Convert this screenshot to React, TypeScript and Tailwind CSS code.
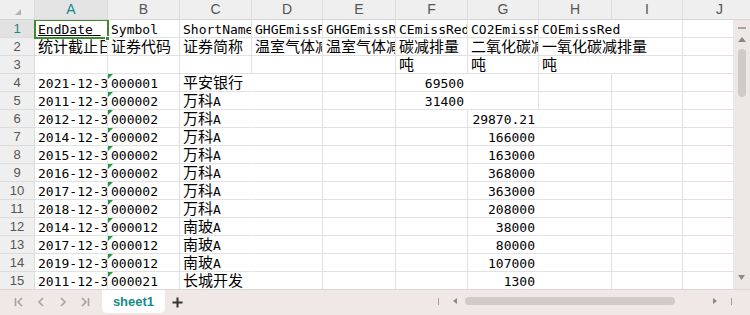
import React from "react";

const COLS = ["A", "B", "C", "D", "E", "F", "G", "H", "I", "J"];
const WIDTHS = [
  "w-[73px]",
  "w-[72px]",
  "w-[72px]",
  "w-[71px]",
  "w-[73px]",
  "w-[72px]",
  "w-[71px]",
  "w-[73px]",
  "w-[71px]",
  "w-[74px]",
];

const rows: string[][] = [
  ["EndDate", "Symbol", "ShortName", "GHGEmissRed", "GHGEmissRedInt", "CEmissRed", "CO2EmissRed", "COEmissRed", "", ""],
  ["统计截止日期", "证券代码", "证券简称", "温室气体减排量", "温室气体减排强度", "碳减排量", "二氧化碳减排量", "一氧化碳减排量", "", ""],
  ["", "", "", "", "", "吨", "吨", "吨", "", ""],
  ["2021-12-31", "000001", "平安银行", "", "", "69500", "", "", "", ""],
  ["2011-12-31", "000002", "万科A", "", "", "31400", "", "", "", ""],
  ["2012-12-31", "000002", "万科A", "", "", "", "29870.21", "", "", ""],
  ["2014-12-31", "000002", "万科A", "", "", "", "166000", "", "", ""],
  ["2015-12-31", "000002", "万科A", "", "", "", "163000", "", "", ""],
  ["2016-12-31", "000002", "万科A", "", "", "", "368000", "", "", ""],
  ["2017-12-31", "000002", "万科A", "", "", "", "363000", "", "", ""],
  ["2018-12-31", "000002", "万科A", "", "", "", "208000", "", "", ""],
  ["2014-12-31", "000012", "南玻A", "", "", "", "38000", "", "", ""],
  ["2017-12-31", "000012", "南玻A", "", "", "", "80000", "", "", ""],
  ["2019-12-31", "000012", "南玻A", "", "", "", "107000", "", "", ""],
  ["2011-12-31", "000021", "长城开发", "", "", "", "1300", "", "", ""],
];

const CJK_RE = /([\u4e00-\u9fff]+)/;
const isNum = (s: string) => /^[\d.]+$/.test(s);

// CJK runs are drawn a bit larger than the latin half-width glyphs
function Text({ value }: { value: string }) {
  return (
    <>
      {value.split(CJK_RE).map((part, i) =>
        CJK_RE.test(part) ? (
          <span key={i} className="text-[15px] leading-[16px]">
            {part}
          </span>
        ) : (
          <span key={i}>{part}</span>
        )
      )}
    </>
  );
}

function Cell({ value, col, row, next }: { value: string; col: number; row: number; next: string }) {
  const overflow = value !== "" && next === "";
  const right = (col === 5 || col === 6) && isNum(value);
  // numbers stored as text get the little green flag
  const flagged = col === 1 && row >= 3;

  return (
    <div
      className={
        "relative h-[18px] shrink-0 flex items-end whitespace-nowrap border-b border-[#e1e1e1] text-[13px] leading-[15px] " +
        WIDTHS[col] +
        (overflow && col < 9 ? " overflow-visible border-r border-r-transparent" : " overflow-hidden border-r border-r-[#e1e1e1]") +
        (right ? " justify-end pr-[3px]" : " pl-[3px]")
      }
    >
      {flagged && (
        <span className="absolute left-0 top-0 w-0 h-0 border-t-[5px] border-t-[#1d9a3c] border-r-[5px] border-r-transparent" />
      )}
      {row === 0 && col === 0 ? (
        <span className="underline underline-offset-[1px]">{value}&nbsp;</span>
      ) : (
        <Text value={value} />
      )}
    </div>
  );
}

export default function App() {
  return (
    <div className="w-[750px] h-[315px] overflow-hidden bg-white flex flex-col font-['DejaVu_Sans_Mono','Noto_Sans_CJK_SC',monospace] text-black">
      {/* column headers */}
      <div className="h-[20px] flex shrink-0 bg-[#efefef] border-b border-[#d6d6d6] font-['Liberation_Sans','Noto_Sans_CJK_SC',sans-serif] text-[14px] text-[#555]">
        <div className="w-[35px] shrink-0 relative border-r border-[#dcdcdc]">
          <svg className="absolute left-[15px] top-[9px]" width="6" height="6" viewBox="0 0 6 6">
            <polygon points="6,0 6,6 0,6" fill="#b4b4b4" />
          </svg>
        </div>
        {COLS.map((c, i) => (
          <div
            key={c}
            className={
              "shrink-0 flex items-center justify-center border-r border-[#dcdcdc] " +
              WIDTHS[i] +
              (i === 0 ? " bg-[#e4e4e4] text-[#16888a]" : "")
            }
          >
            {c}
          </div>
        ))}
      </div>

      <div className="flex flex-1 min-h-0">
        {/* grid */}
        <div className="relative w-[733px] overflow-hidden">
          {rows.map((r, ri) => (
            <div key={ri} className="flex">
              <div
                className={
                  "w-[35px] h-[18px] shrink-0 flex items-center justify-center border-r border-b border-[#dcdcdc] font-['Liberation_Sans',sans-serif] text-[13px] " +
                  (ri === 0 ? "bg-[#e2e2e2] text-[#16888a]" : "bg-[#efefef] text-[#555]")
                }
              >
                {ri + 1}
              </div>
              {r.map((v, ci) => (
                <Cell key={ci} value={v} col={ci} row={ri} next={r[ci + 1] ?? ""} />
              ))}
            </div>
          ))}
          {/* selection on A1 */}
          <div className="absolute left-[34px] top-[-1px] w-[75px] h-[20px] border-2 border-[#3d8a2f]" />
          <div className="absolute left-[105px] top-[16px] w-[5px] h-[5px] bg-[#3d8a2f] border border-white" />
        </div>

        {/* vertical scrollbar */}
        <div className="w-[17px] shrink-0 bg-[#ede7e6] flex flex-col items-center">
          <div className="mt-[7px] w-[8px] h-[2px] bg-[#a9a3a3]" />
          <svg className="mt-[8px]" width="8" height="5" viewBox="0 0 8 5">
            <polygon points="4,0 8,5 0,5" fill="#8d8787" />
          </svg>
          <div className="mt-[7px] w-[8px] h-[48px] rounded-full bg-[#cfc9c9]" />
          <div className="flex-1" />
          <svg className="mb-[9px]" width="7" height="5" viewBox="0 0 7 5">
            <polygon points="0,0 7,0 3.5,5" fill="#8d8787" />
          </svg>
        </div>
      </div>

      {/* sheet tabs bar */}
      <div className="h-[26px] shrink-0 bg-[#efe8e7] border-t border-[#dcd6d5] flex items-start">
        <div className="flex items-center h-[24px] pl-[14px] gap-[12px] text-[#a3a3a3]">
          <svg width="10" height="10" viewBox="0 0 10 10" fill="none" stroke="currentColor" strokeWidth="1.6">
            <path d="M1.5 1v8M8 1L4 5l4 4" />
          </svg>
          <svg width="10" height="10" viewBox="0 0 10 10" fill="none" stroke="currentColor" strokeWidth="1.6">
            <path d="M7 1L3 5l4 4" />
          </svg>
          <svg width="10" height="10" viewBox="0 0 10 10" fill="none" stroke="currentColor" strokeWidth="1.6">
            <path d="M3 1l4 4-4 4" />
          </svg>
          <svg width="10" height="10" viewBox="0 0 10 10" fill="none" stroke="currentColor" strokeWidth="1.6">
            <path d="M2 1l4 4-4 4M8.5 1v8" />
          </svg>
        </div>
        <div className="ml-[12px] w-[63px] h-[23px] bg-white rounded-b-[5px] flex items-center justify-center font-['Liberation_Sans',sans-serif] font-bold text-[13px] text-[#178a8b]">
          sheet1
        </div>
        <svg className="ml-[7px] mt-[7px]" width="11" height="11" viewBox="0 0 11 11" stroke="#333" strokeWidth="2">
          <path d="M5.5 0.5v10M0.5 5.5h10" />
        </svg>
        <div className="flex-1" />
        {/* horizontal scrollbar */}
        <div className="flex items-center h-[22px] mr-[18px]">
          <div className="w-[1px] h-[7px] bg-[#a6a0a0]" />
          <svg className="ml-[14px]" width="4" height="6" viewBox="0 0 4 6">
            <polygon points="4,0 4,6 0,3" fill="#8d8787" />
          </svg>
          <div className="ml-[8px] w-[210px] h-[8px] rounded-full bg-[#d0caca]" />
          <div className="w-[38px]" />
          <svg width="4" height="6" viewBox="0 0 4 6">
            <polygon points="0,0 4,3 0,6" fill="#8d8787" />
          </svg>
          <div className="ml-[14px] w-[1px] h-[7px] bg-[#a6a0a0]" />
        </div>
      </div>
    </div>
  );
}
